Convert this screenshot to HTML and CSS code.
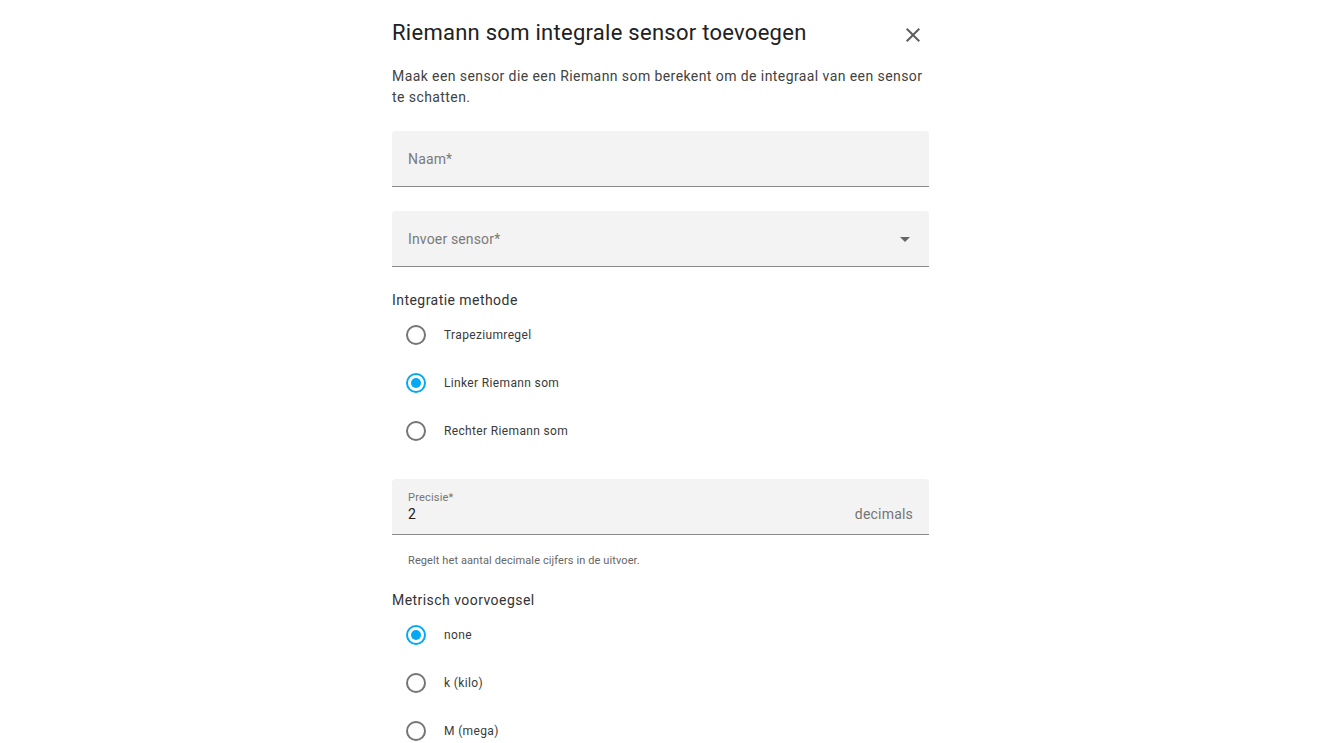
FILE: index.html
```html
<!DOCTYPE html>
<html>
<head>
<meta charset="utf-8">
<link rel="stylesheet" href="styles.css">
</head>
<body>
<div class="dialog">
  <div class="header">
    <h2 class="title">Riemann som integrale sensor toevoegen</h2>
    <span class="close">
      <svg viewBox="0 0 24 24" width="24" height="24"><path fill="#5f5f5f" d="M19,6.41L17.59,5L12,10.59L6.41,5L5,6.41L10.59,12L5,17.59L6.41,19L12,13.41L17.59,19L19,17.59L13.41,12L19,6.41Z"/></svg>
    </span>
  </div>
  <p class="desc">Maak een sensor die een Riemann som berekent om de integraal van een sensor te schatten.</p>

  <div class="field">
    <span class="placeholder">Naam*</span>
  </div>

  <div class="field select">
    <span class="placeholder">Invoer sensor*</span>
    <svg class="arrow" viewBox="0 0 10 5" width="10" height="5"><path fill="#666" d="M0 0h10L5 5z"/></svg>
  </div>

  <div class="group">
    <div class="group-label">Integratie methode</div>
    <div class="radio"><span class="ring"></span><span class="rlabel">Trapeziumregel</span></div>
    <div class="radio"><span class="ring on"></span><span class="rlabel">Linker Riemann som</span></div>
    <div class="radio"><span class="ring"></span><span class="rlabel">Rechter Riemann som</span></div>
  </div>

  <div class="field filled">
    <div class="fcol">
      <span class="flabel">Precisie*</span>
      <span class="fvalue">2</span>
    </div>
    <span class="suffix">decimals</span>
  </div>
  <div class="helper">Regelt het aantal decimale cijfers in de uitvoer.</div>

  <div class="group g2">
    <div class="group-label">Metrisch voorvoegsel</div>
    <div class="radio"><span class="ring on"></span><span class="rlabel">none</span></div>
    <div class="radio"><span class="ring"></span><span class="rlabel">k (kilo)</span></div>
    <div class="radio"><span class="ring"></span><span class="rlabel">M (mega)</span></div>
  </div>
</div>
</body>
</html>
```
FILE: styles.css
```css
html, body {
  margin: 0;
  padding: 0;
  background: #fff;
  font-family: Roboto, "Liberation Sans", sans-serif;
  overflow: hidden;
}
.dialog {
  width: 537px;
  margin: 0 auto;
  padding-top: 19px;
}
.header {
  display: flex;
  align-items: center;
  justify-content: space-between;
  height: 28px;
}
.title {
  margin: 0;
  font-size: 22px;
  font-weight: 400;
  color: #212121;
  line-height: 28px;
  letter-spacing: 0.27px;
}
.close {
  display: flex;
  width: 24px;
  height: 24px;
  margin-right: 4px;
  margin-top: 4px;
}
.desc {
  margin: 19px 0 0;
  font-size: 14px;
  line-height: 21px;
  color: #424242;
  letter-spacing: 0.42px;
}
.field {
  height: 55px;
  background: #f3f3f3;
  border-bottom: 1px solid #8a8a8a;
  border-radius: 4px 4px 0 0;
  margin-top: 24px;
  display: flex;
  align-items: center;
  padding: 0 16px;
}
.desc + .field { margin-top: 23px; }
.placeholder {
  font-size: 14px;
  color: #7a7a7a;
  letter-spacing: 0.15px;
}
.select { justify-content: space-between; }
.arrow { margin-right: 3px; margin-top: 2px; }
.group { margin-top: 24px; }
.group-label {
  font-size: 14px;
  color: #333;
  line-height: 18px;
  letter-spacing: 0.45px;
}
.radio {
  display: flex;
  align-items: center;
  height: 48px;
}
.group .group-label + .radio { margin-top: 2px; }
.ring {
  box-sizing: border-box;
  width: 20px;
  height: 20px;
  border: 2px solid #757575;
  border-radius: 50%;
  margin-left: 14px;
  position: relative;
  flex: none;
}
.ring.on { border-color: #03a9f4; }
.ring.on::after {
  content: "";
  position: absolute;
  left: 3px;
  top: 3px;
  width: 10px;
  height: 10px;
  border-radius: 50%;
  background: #03a9f4;
}
.rlabel {
  margin-left: 18px;
  font-size: 12px;
  color: #3a3a3a;
  letter-spacing: 0.35px;
}
.filled {
  margin-top: 24px;
  justify-content: space-between;
  align-items: flex-start;
}
.fcol {
  display: flex;
  flex-direction: column;
  padding-top: 12px;
}
.flabel {
  font-size: 11px;
  color: #757575;
  line-height: 13px;
  letter-spacing: 0.2px;
}
.fvalue {
  font-size: 14px;
  color: #212121;
  line-height: 20px;
  margin-top: 0;
}
.suffix {
  font-size: 14px;
  color: #757575;
  margin-top: 27px;
  letter-spacing: 0.2px;
}
.helper {
  font-size: 11px;
  color: #666;
  padding-left: 16px;
  margin-top: 19px;
  letter-spacing: 0.1px;
}
.g2 { margin-top: 24px; }
```
